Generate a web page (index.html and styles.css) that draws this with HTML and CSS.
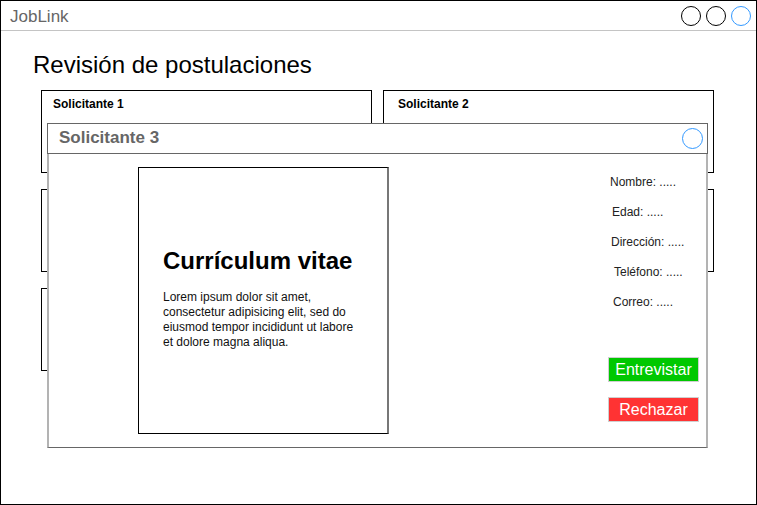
FILE: index.html
```html
<!DOCTYPE html>
<html lang="es">
<head>
<meta charset="utf-8">
<title>JobLink</title>
<link rel="stylesheet" href="styles.css">
</head>
<body>
<div class="window">
  <div class="titlebar">
    <span class="app-name">JobLink</span>
    <div class="win-controls">
      <span class="dot"></span>
      <span class="dot"></span>
      <span class="dot dot-blue"></span>
    </div>
  </div>
  <h1 class="page-title">Revisión de postulaciones</h1>
  <div class="cards">
    <div class="card">Solicitante 1</div>
    <div class="card card-right">Solicitante 2</div>
    <div class="card">Solicitante 4</div>
    <div class="card card-right">Solicitante 5</div>
    <div class="card">Solicitante 6</div>
  </div>

  <div class="dialog">
    <div class="dialog-header">
      <span class="dialog-title">Solicitante 3</span>
      <span class="dot dot-blue dot-lg"></span>
    </div>
    <div class="dialog-body">
      <div class="cv">
        <h2 class="cv-title">Currículum vitae</h2>
        <p class="cv-text">Lorem ipsum dolor sit amet, consectetur adipisicing elit, sed do eiusmod tempor incididunt ut labore et dolore magna aliqua.</p>
      </div>
      <div class="side">
        <div class="fields">
          <div class="field f-nombre">Nombre: .....</div>
          <div class="field f-edad">Edad: .....</div>
          <div class="field f-dir">Dirección: .....</div>
          <div class="field f-tel">Teléfono: .....</div>
          <div class="field f-correo">Correo: .....</div>
        </div>
        <div class="actions">
          <button class="btn btn-green">Entrevistar</button>
          <button class="btn btn-red">Rechazar</button>
        </div>
      </div>
    </div>
  </div>
</div>
</body>
</html>
```

FILE: styles.css
```css
* { box-sizing: border-box; }

body {
  margin: 0;
  background: #fff;
  font-family: "Liberation Sans", Arial, sans-serif;
  color: #000;
}

.window {
  position: relative;
  width: 757px;
  height: 505px;
  border: 1px solid #000;
  background: #fff;
}

.titlebar {
  height: 30px;
  border-bottom: 1px solid #c4c4c4;
  display: flex;
  align-items: center;
  justify-content: space-between;
  padding: 0 5px 0 9px;
}

.app-name {
  font-size: 17px;
  color: #666;
  line-height: 18px;
  margin-top: 2px;
}

.win-controls {
  display: flex;
  gap: 5px;
  margin-top: 1px;
}

.dot {
  display: block;
  width: 20px;
  height: 20px;
  border-radius: 50%;
  border: 1.4px solid #000;
}

.dot-blue { border-color: #3399ff; }

.dot-lg {
  width: 21px;
  height: 21px;
}

.page-title {
  margin: 20px 0 0 32px;
  font-size: 24px;
  line-height: 28px;
  font-weight: normal;
}

.cards {
  margin: 11px 0 0 40px;
  display: grid;
  grid-template-columns: 331px 331px;
  grid-template-rows: 83px 83px 83px;
  column-gap: 11px;
  row-gap: 16px;
}

.card {
  border: 1px solid #000;
  padding: 6px 11px 5px;
  font-size: 12px;
  line-height: 15px;
  font-weight: bold;
}

.card-right { padding-left: 14px; }

.dialog {
  position: absolute;
  left: 46px;
  top: 122px;
  width: 661px;
  background: #fff;
}

.dialog-header {
  height: 31px;
  border: 1px solid #666;
  display: flex;
  align-items: center;
  justify-content: space-between;
  padding: 0 4px 0 11px;
}

.dialog-title {
  font-size: 17px;
  line-height: 20px;
  font-weight: bold;
  color: #666;
  margin-top: -2px;
}

.dialog-body {
  height: 294px;
  border-left: 2px solid #b3b3b3;
  border-right: 2px solid #b3b3b3;
  border-bottom: 1px solid #666;
  display: flex;
  align-items: flex-start;
}

.cv {
  margin: 13px 0 0 89px;
  width: 251px;
  height: 267px;
  border: 1px solid #000;
  border-right: 2px solid #777;
  padding: 79px 24px 0;
}

.cv-title {
  margin: 0 0 16px;
  font-size: 24px;
  line-height: 27px;
  font-weight: bold;
}

.cv-text {
  margin: 0;
  font-size: 12px;
  line-height: 15px;
  color: #111;
}

.side {
  margin-left: auto;
  margin-right: 7px;
  width: 91px;
  padding-top: 13px;
}

.field {
  font-size: 12px;
  line-height: 30px;
  color: #222;
  padding-left: 2px;
}

.f-edad { padding-left: 4px; }
.f-dir { padding-left: 3px; }
.f-tel { padding-left: 6px; }
.f-correo { padding-left: 5px; }

.actions {
  margin-top: 40px;
  display: flex;
  flex-direction: column;
  gap: 15px;
}

.btn {
  display: block;
  width: 91px;
  height: 25px;
  border: 1px solid #cfcfcf;
  color: #fff;
  font-family: "Liberation Sans", Arial, sans-serif;
  font-size: 16px;
  line-height: 22px;
  padding: 0;
  text-align: center;
}

.btn-green { background: #00c800; }
.btn-red { background: #ff3333; }
```
